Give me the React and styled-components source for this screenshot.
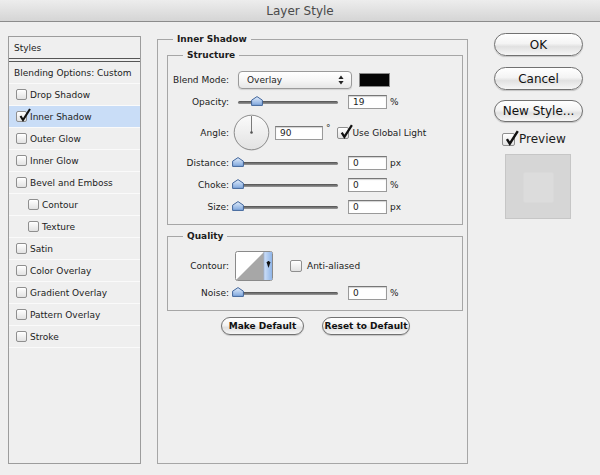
import React from 'react';
import styled, { createGlobalStyle } from 'styled-components';

const GlobalStyle = createGlobalStyle`
  html, body { margin: 0; padding: 0; background: #efefef; }
  body {
    font-family: "DejaVu Sans", Verdana, sans-serif;
    font-size: 9px;
    color: #1c1c1c;
  }
`;

const Window = styled.div`
  width: 600px;
  height: 475px;
  background: #efefef;
  display: flex;
  flex-direction: column;
  overflow: hidden;
`;

const TitleBar = styled.div`
  height: 21px;
  border-bottom: 1px solid #8c8c8c;
  background: linear-gradient(#ededed, #d5d5d5);
  display: flex;
  align-items: center;
  justify-content: center;
  font-size: 12px;
  color: #4a4a4a;
`;

const Body = styled.div`
  display: flex;
  align-items: flex-start;
  padding-left: 8px;
`;

/* ---------- left list ---------- */

const StylesList = styled.div`
  margin-top: 14px;
  width: 131px;
  height: 426px;
  border: 1px solid #9c9c9c;
  display: flex;
  flex-direction: column;
`;

const ListHeader = styled.div`
  height: 21px;
  padding-left: 5px;
  display: flex;
  align-items: center;
`;

const DoubleRule = styled.div`
  height: 2px;
  border-top: 1px solid #555;
  border-bottom: 1px solid #555;
`;

const ListRow = styled.div`
  height: ${p => p.$h || 21}px;
  border-bottom: 1px solid #fafafa;
  padding-left: ${p => p.$pad}px;
  display: flex;
  align-items: center;
  gap: 3px;
  background: ${p => (p.$active ? '#c9ddf7' : 'transparent')};
`;

/* ---------- checkbox ---------- */

const Box = styled.span`
  position: relative;
  display: inline-block;
  flex: none;
  width: ${p => p.$size}px;
  height: ${p => p.$size}px;
  box-sizing: border-box;
  border: 1px solid #8f8f8f;
  border-radius: 2px;
  background: linear-gradient(#ffffff, #e2e2e2);
  box-shadow: inset 0 1px 0 #fff;
`;

const CheckMark = styled.svg`
  position: absolute;
  left: 1px;
  top: -4px;
`;

const Checkbox = ({ checked, size = 11 }) => (
  <Box $size={size}>
    {checked && (
      <CheckMark width={size + 2} height={size + 3} viewBox="0 0 13 14">
        <path d="M2.5 8 L5 12 L12 1" fill="none" stroke="#111" strokeWidth="2.1" strokeLinejoin="miter" />
      </CheckMark>
    )}
  </Box>
);

/* ---------- groups ---------- */

const Group = styled.fieldset`
  box-sizing: border-box;
  margin: ${p => p.$margin || 0};
  padding: ${p => p.$padding || 0};
  border: 1px solid #a6a6a6;
  min-width: 0;
  ${p => p.$w && `width: ${p.$w}px;`}
  ${p => p.$h && `height: ${p.$h}px;`}
`;

const Legend = styled.legend`
  margin-left: 15px;
  padding: 0 4px;
  font-weight: bold;
  font-size: 9px;
  line-height: 12px;
  color: #1c1c1c;
`;

const Row = styled.div`
  display: flex;
  align-items: center;
  height: ${p => p.$h}px;
`;

const Label = styled.div`
  width: 61px;
  flex: none;
  text-align: right;
  white-space: nowrap;
`;

/* ---------- controls ---------- */

const Select = styled.div`
  margin-left: 9px;
  width: 114px;
  height: 18px;
  box-sizing: border-box;
  border: 1px solid #9a9a9a;
  border-radius: 4px;
  background: linear-gradient(#ffffff 0%, #f6f6f6 50%, #e6e6e6 100%);
  box-shadow: 0 1px 1px rgba(0, 0, 0, 0.12);
  display: flex;
  align-items: center;
  justify-content: space-between;
  padding: 0 7px 0 8px;
`;

const Swatch = styled.div`
  margin-left: 7px;
  width: 31px;
  height: 14px;
  box-sizing: border-box;
  border: 1px solid #8a8a8a;
  background: #050505;
`;

const SliderWrap = styled.div`
  margin-left: 4px;
  padding: 0 5px;
  height: 12px;
  display: flex;
  align-items: center;
`;

const Track = styled.div`
  position: relative;
  width: 100px;
  height: 3px;
  border-radius: 2px;
  background: linear-gradient(#4f4f4f, #9b9b9b);
`;

const Thumb = styled.svg`
  position: absolute;
  top: -5px;
  margin-left: -6px;
`;

const Slider = ({ value }) => (
  <SliderWrap>
    <Track>
      <Thumb width="12" height="10" viewBox="0 0 12 10" style={{ left: `${value}%` }}>
        <defs>
          <linearGradient id="thumbFill" x1="0" y1="0" x2="0" y2="1">
            <stop offset="0" stopColor="#e3eefc" />
            <stop offset="1" stopColor="#7ea6dd" />
          </linearGradient>
        </defs>
        <path d="M6 0.6 L11.4 4.2 L11.4 9.4 L0.6 9.4 L0.6 4.2 Z" fill="url(#thumbFill)" stroke="#41659a" strokeWidth="1" />
      </Thumb>
    </Track>
  </SliderWrap>
);

const Field = styled.div`
  margin-left: ${p => p.$ml ?? 5}px;
  width: ${p => p.$w || 39}px;
  height: 14px;
  box-sizing: border-box;
  border: 1px solid #9a9a9a;
  border-top-color: #777;
  background: #fff;
  box-shadow: inset 0 1px 1px rgba(0, 0, 0, 0.18);
  padding-left: 4px;
  display: flex;
  align-items: center;
`;

const Unit = styled.span`
  margin-left: 3px;
  align-self: ${p => (p.$sup ? 'flex-start' : 'center')};
  margin-top: ${p => (p.$sup ? '10px' : 0)};
`;

const Dial = styled.svg`
  margin-left: 4px;
  flex: none;
`;

const InlineCheck = styled.label`
  margin-left: ${p => p.$ml}px;
  display: flex;
  align-items: center;
  gap: ${p => p.$gap || 4}px;
`;

const ContourPicker = styled.svg`
  margin-left: 6px;
  flex: none;
`;

const SliderRow = ({ label, value, unit }) => (
  <Row $h={22}>
    <Label>{label}</Label>
    <Slider value={value} />
    <Field>{value}</Field>
    <Unit>{unit}</Unit>
  </Row>
);

const ButtonRow = styled.div`
  margin-top: 6px;
  display: flex;
  justify-content: center;
  gap: 18px;
  padding-left: 6px;
`;

const PillButton = styled.button`
  width: ${p => p.$w}px;
  height: ${p => p.$h}px;
  box-sizing: border-box;
  border-radius: ${p => p.$h / 2}px;
  border: 1px solid #717171;
  background: linear-gradient(#ffffff 0%, #f4f4f4 45%, #e1e1e1 60%, #f6f6f6 100%);
  box-shadow: 0 1px 1px rgba(0, 0, 0, 0.18);
  font-family: "DejaVu Sans", Verdana, sans-serif;
  font-size: ${p => p.$fs}px;
  font-weight: ${p => (p.$bold ? 'bold' : 'normal')};
  color: #111;
  padding: 0;
  display: flex;
  align-items: center;
  justify-content: center;
`;

/* ---------- right column ---------- */

const SideColumn = styled.div`
  margin-top: 11px;
  margin-left: 26px;
  width: 89px;
  display: flex;
  flex-direction: column;
`;

const PreviewToggle = styled.label`
  margin-top: 10px;
  margin-left: 8px;
  display: flex;
  align-items: center;
  gap: 4px;
  font-size: 12px;
  height: 14px;
`;

const PreviewBox = styled.div`
  margin-top: 8px;
  margin-left: 11px;
  width: 66px;
  height: 65px;
  box-sizing: border-box;
  border: 1px solid #c6c6c6;
  background: #d6d6d6;
  display: flex;
  align-items: center;
  justify-content: center;
`;

const PreviewInner = styled.div`
  width: 31px;
  height: 31px;
  margin: 2px 0 0 1px;
  background: #dcdcdc;
  box-shadow: inset 0 0 2px rgba(0, 0, 0, 0.06);
`;

const styleItems = [
  { name: 'Drop Shadow' },
  { name: 'Inner Shadow', checked: true, active: true },
  { name: 'Outer Glow' },
  { name: 'Inner Glow' },
  { name: 'Bevel and Emboss' },
  { name: 'Contour', indent: true },
  { name: 'Texture', indent: true },
  { name: 'Satin' },
  { name: 'Color Overlay' },
  { name: 'Gradient Overlay' },
  { name: 'Pattern Overlay' },
  { name: 'Stroke' },
];

export default function App() {
  return (
    <Window>
      <GlobalStyle />
      <TitleBar>Layer Style</TitleBar>
      <Body>
        <StylesList>
          <ListHeader>Styles</ListHeader>
          <DoubleRule />
          <ListRow $h={21} $pad={5}>Blending Options: Custom</ListRow>
          {styleItems.map(item => (
            <ListRow key={item.name} $pad={item.indent ? 19 : 7} $active={item.active}>
              <Checkbox checked={item.checked} />
              <span>{item.name}</span>
            </ListRow>
          ))}
        </StylesList>

        <Group $margin="11px 0 0 16px" $w={311} $h={431}>
          <Legend>Inner Shadow</Legend>

          <Group $margin="4px 4px 0 9px" $padding="7px 0 6px 0">
            <Legend>Structure</Legend>
            <Row $h={23}>
              <Label>Blend Mode:</Label>
              <Select>
                <span>Overlay</span>
                <svg width="6" height="10" viewBox="0 0 6 10">
                  <path d="M3 0.5 L5.6 4 L0.4 4 Z M3 9.5 L5.6 6 L0.4 6 Z" fill="#222" />
                </svg>
              </Select>
              <Swatch />
            </Row>
            <SliderRow label="Opacity:" value={19} unit="%" />
            <Row $h={39}>
              <Label>Angle:</Label>
              <Dial width="37" height="37" viewBox="0 0 37 37">
                <defs>
                  <linearGradient id="dialFill" x1="0" y1="0" x2="0" y2="1">
                    <stop offset="0" stopColor="#fbfbfb" />
                    <stop offset="1" stopColor="#e2e2e2" />
                  </linearGradient>
                </defs>
                <circle cx="18.5" cy="19" r="17.5" fill="rgba(0,0,0,0.08)" />
                <circle cx="18.5" cy="18.5" r="17.3" fill="url(#dialFill)" stroke="#8d8d8d" strokeWidth="1" />
                <line x1="18.5" y1="18.5" x2="18.5" y2="2" stroke="#7a7a7a" strokeWidth="1" />
                <circle cx="18.5" cy="18.5" r="1.3" fill="#555" />
              </Dial>
              <Field $w={48} $ml={5}>90</Field>
              <Unit $sup>°</Unit>
              <InlineCheck $ml={6}>
                <Checkbox checked size={12} />
                <span>Use Global Light</span>
              </InlineCheck>
            </Row>
            <SliderRow label="Distance:" value={0} unit="px" />
            <SliderRow label="Choke:" value={0} unit="%" />
            <SliderRow label="Size:" value={0} unit="px" />
          </Group>

          <Group $margin="5px 4px 0 9px" $padding="7px 0 7px 0">
            <Legend>Quality</Legend>
            <Row $h={34}>
              <Label>Contour:</Label>
              <ContourPicker width="38" height="30" viewBox="0 0 38 30">
                <defs>
                  <linearGradient id="contourBtn" x1="0" y1="0" x2="1" y2="0">
                    <stop offset="0" stopColor="#cfe0f8" />
                    <stop offset="1" stopColor="#8fb5e8" />
                  </linearGradient>
                </defs>
                <rect x="0.5" y="0.5" width="37" height="29" rx="2" fill="#fff" stroke="#8a8a8a" />
                <polygon points="1,29 29,1 29,29" fill="#a7a7a7" />
                <rect x="29" y="1" width="8" height="28" fill="url(#contourBtn)" />
                <line x1="29" y1="1" x2="29" y2="29" stroke="#9cb3d4" strokeWidth="0.8" />
                <polygon points="31.5,11 35.5,11 33.5,17" fill="#111" />
                <rect x="32.6" y="10" width="1.8" height="3" fill="#111" />
              </ContourPicker>
              <InlineCheck $ml={17} $gap={5}>
                <Checkbox size={12} />
                <span>Anti-aliased</span>
              </InlineCheck>
            </Row>
            <Row $h={20}>
              <Label>Noise:</Label>
              <Slider value={0} />
              <Field>0</Field>
              <Unit>%</Unit>
            </Row>
          </Group>

          <ButtonRow>
            <PillButton $w={83} $h={18} $fs={9} $bold>Make Default</PillButton>
            <PillButton $w={88} $h={18} $fs={9} $bold>Reset to Default</PillButton>
          </ButtonRow>
        </Group>

        <SideColumn>
          <PillButton $w={89} $h={23} $fs={12}>OK</PillButton>
          <div style={{ height: 11 }} />
          <PillButton $w={89} $h={23} $fs={12}>Cancel</PillButton>
          <div style={{ height: 10 }} />
          <PillButton $w={89} $h={22} $fs={12}>New Style...</PillButton>
          <PreviewToggle>
            <Checkbox checked size={13} />
            <span>Preview</span>
          </PreviewToggle>
          <PreviewBox>
            <PreviewInner />
          </PreviewBox>
        </SideColumn>
      </Body>
    </Window>
  );
}
